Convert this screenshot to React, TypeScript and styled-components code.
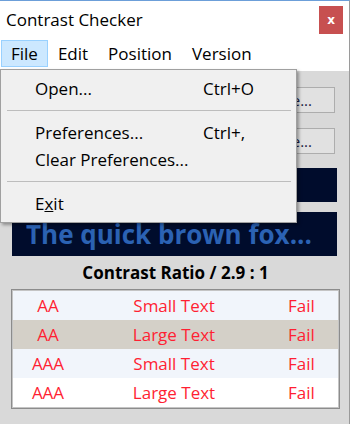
import styled, { createGlobalStyle } from "styled-components";

const GlobalStyle = createGlobalStyle`
  html, body {
    margin: 0;
    padding: 0;
    background: #d9d9d9;
  }
  body {
    font-family: "Open Sans", "Noto Sans", sans-serif;
    color: #000;
  }
  * {
    box-sizing: border-box;
  }
`;

const Window = styled.div`
  position: relative;
  width: 350px;
  height: 424px;
  border-top: 1px solid #6c9fd9;
  border-right: 1px solid #9a9a9a;
  background: #d9d9d9;
  overflow: hidden;
`;

const TitleBar = styled.div`
  height: 37px;
  display: flex;
  align-items: center;
  justify-content: space-between;
  padding: 0 6px 0 6px;
  background: #fff;
`;

const Title = styled.span`
  font-size: 17px;
`;

const CloseButton = styled.div`
  width: 24px;
  height: 28px;
  display: flex;
  align-items: center;
  justify-content: center;
  background: #c75050;
  color: #fff;
  font-family: "DejaVu Sans", sans-serif;
  font-size: 12px;
  font-weight: bold;
`;

const MenuBar = styled.div`
  height: 33px;
  display: flex;
  align-items: flex-start;
  padding: 2px 0 0 1px;
  background: #fff;
`;

const MenuTitle = styled.div<{ $open?: boolean }>`
  height: 27px;
  padding: 0 9px;
  display: flex;
  align-items: center;
  font-size: 17px;
  border: 1px solid ${(p) => (p.$open ? "#99d1ff" : "transparent")};
  background: ${(p) => (p.$open ? "#cce8ff" : "transparent")};
`;

const Content = styled.div`
  display: flex;
  flex-direction: column;
  padding: 16px 9px 0 11px;
`;

const ButtonRow = styled.div<{ $gap?: number }>`
  display: flex;
  justify-content: flex-end;
  padding-right: 5px;
  margin-top: ${(p) => p.$gap ?? 0}px;
`;

const PickButton = styled.div`
  width: 96px;
  height: 26px;
  display: flex;
  align-items: center;
  justify-content: flex-end;
  padding-right: 22px;
  background: #e1e1e1;
  border: 1px solid #adadad;
  font-size: 15px;
  color: #1a1a40;
`;

const Swatch = styled.div<{ $height: number; $gap: number }>`
  height: ${(p) => p.$height}px;
  margin: ${(p) => p.$gap}px 3px 0 1px;
  display: flex;
  align-items: center;
  padding-left: 14px;
  background: #000c2c;
  color: #2b62b3;
  font-size: 26px;
  font-weight: bold;
  white-space: nowrap;
  overflow: hidden;
`;

const Ratio = styled.div`
  height: 33px;
  display: flex;
  align-items: center;
  justify-content: center;
  font-size: 17px;
  font-weight: bold;
`;

const Table = styled.div`
  border: 1px solid #8c8c8c;
  box-shadow: inset 0 0 0 1px #c4c4c4;
  padding: 1px;
`;

const Row = styled.div<{ $bg: string }>`
  display: grid;
  grid-template-columns: 70px 182px 1fr;
  height: 29px;
  align-items: center;
  background: ${(p) => p.$bg};
  color: #ff1f33;
  font-size: 17px;
  text-align: center;
`;

const Dropdown = styled.div`
  position: absolute;
  left: 0;
  top: 68px;
  width: 297px;
  padding: 5px 0;
  background: #f0f0f0;
  border: 1px solid #a0a0a0;
  box-shadow: 2px 2px 3px rgba(0, 0, 0, 0.35);
  z-index: 5;
`;

const Item = styled.div`
  height: 27px;
  display: flex;
  align-items: center;
  font-size: 17px;
`;

const ItemLabel = styled.span`
  flex: 0 0 202px;
  padding-left: 34px;
`;

const Separator = styled.div`
  height: 1px;
  margin: 8px 5px 8px 6px;
  background: #bdbdbd;
`;

const results = [
  { level: "AA", size: "Small Text", bg: "#f1f5fb" },
  { level: "AA", size: "Large Text", bg: "#d4d0c8" },
  { level: "AAA", size: "Small Text", bg: "#f1f5fb" },
  { level: "AAA", size: "Large Text", bg: "#ffffff" },
];

export default function App() {
  return (
    <>
      <GlobalStyle />
      <Window>
        <TitleBar>
          <Title>Contrast Checker</Title>
          <CloseButton>x</CloseButton>
        </TitleBar>
        <MenuBar>
          <MenuTitle $open>File</MenuTitle>
          <MenuTitle>Edit</MenuTitle>
          <MenuTitle>Position</MenuTitle>
          <MenuTitle>Version</MenuTitle>
        </MenuBar>

        <Content>
          <ButtonRow>
            <PickButton>Choose...</PickButton>
          </ButtonRow>
          <ButtonRow $gap={15}>
            <PickButton>Choose...</PickButton>
          </ButtonRow>
          <Swatch $height={34} $gap={14} />
          <Swatch $height={44} $gap={10}>
            The quick brown fox...
          </Swatch>
          <Ratio>Contrast Ratio / 2.9 : 1</Ratio>
          <Table>
            {results.map((r, i) => (
              <Row key={i} $bg={r.bg}>
                <span>{r.level}</span>
                <span>{r.size}</span>
                <span>Fail</span>
              </Row>
            ))}
          </Table>
        </Content>

        {/* open File menu */}
        <Dropdown>
          <Item>
            <ItemLabel>Open...</ItemLabel>
            <span>Ctrl+O</span>
          </Item>
          <Separator />
          <Item>
            <ItemLabel>Preferences...</ItemLabel>
            <span>Ctrl+,</span>
          </Item>
          <Item>
            <ItemLabel>Clear Preferences...</ItemLabel>
          </Item>
          <Separator />
          <Item>
            <ItemLabel>
              E<u>x</u>it
            </ItemLabel>
          </Item>
        </Dropdown>
      </Window>
    </>
  );
}
